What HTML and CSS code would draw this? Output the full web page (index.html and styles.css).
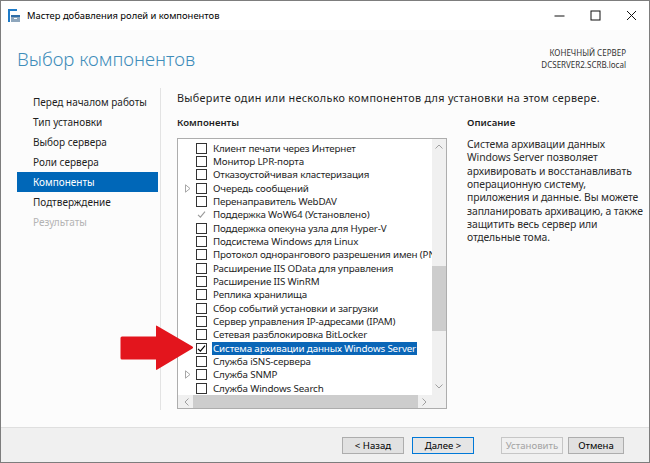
FILE: index.html
```html
<!DOCTYPE html>
<html lang="ru">
  <head>
    <meta charset="UTF-8" />
    <title>Мастер добавления ролей и компонентов</title>
    <link rel="stylesheet" href="styles.css">
  </head>
  <body>
    <div class="window">
      <div class="titlebar">
        <svg class="app-icon" width="14" height="14" viewBox="0 0 14 14">
          <rect x="1" y="0" width="2" height="13" fill="#1f7bc8" />
          <rect x="1" y="0" width="9" height="2" fill="#1f7bc8" />
          <rect x="4" y="6" width="9" height="7" fill="#8fa7bd" />
          <rect x="4" y="6" width="9" height="2" fill="#2f6ea8" />
          <rect x="7" y="9" width="3" height="1" fill="#fff" />
        </svg>
        <span class="caption">Мастер добавления ролей и компонентов</span>
        <div class="controls">
          <span class="ctl">
            <svg width="11" height="11" viewBox="0 0 11 11"><path d="M0.5 6h10" stroke="#111" stroke-width="1" /></svg>
          </span>
          <span class="ctl">
            <svg width="11" height="11" viewBox="0 0 11 11"><rect x="1" y="1" width="9" height="9" fill="none" stroke="#111" stroke-width="1" /></svg>
          </span>
          <span class="ctl">
            <svg width="11" height="11" viewBox="0 0 11 11"><path d="M1 1l9 9M10 1l-9 9" stroke="#111" stroke-width="1" /></svg>
          </span>
        </div>
      </div>

      <div class="header">
        <h1 class="page-title">Выбор компонентов</h1>
        <div class="target">КОНЕЧНЫЙ СЕРВЕР<br />DCSERVER2.SCRB.local</div>
      </div>

      <div class="main">
        <ul class="steps">
          <li>Перед началом работы</li>
          <li>Тип установки</li>
          <li>Выбор сервера</li>
          <li>Роли сервера</li>
          <li class="active">Компоненты</li>
          <li>Подтверждение</li>
          <li class="disabled">Результаты</li>
        </ul>

        <div class="page">
          <p class="intro">Выберите один или несколько компонентов для установки на этом сервере.</p>
          <div class="columns">
            <div class="col-list">
              <h2>Компоненты</h2>
              <div class="listbox">
                <div class="list-body">
                  <ul class="features">
                    <li><span class="exp"></span><span class="box"></span><span class="name">Клиент печати через Интернет</span></li>
                    <li><span class="exp"></span><span class="box"></span><span class="name">Монитор LPR-порта</span></li>
                    <li><span class="exp"></span><span class="box"></span><span class="name">Отказоустойчивая кластеризация</span></li>
                    <li><span class="exp"><svg width="6" height="9" viewBox="0 0 6 9"><path d="M0.5 0.8L5 4.5L0.5 8.2Z" fill="none" stroke="#a6a6a6" /></svg></span><span class="box"></span><span class="name">Очередь сообщений</span></li>
                    <li><span class="exp"></span><span class="box"></span><span class="name">Перенаправитель WebDAV</span></li>
                    <li><span class="exp"></span><span class="box locked"><svg width="9" height="9" viewBox="0 0 9 9"><path d="M1 4.8L3.4 7.2L8 1.6" fill="none" stroke="#9a9a9a" stroke-width="1.1" /></svg></span><span class="name">Поддержка WoW64 (Установлено)</span></li>
                    <li><span class="exp"></span><span class="box"></span><span class="name">Поддержка опекуна узла для Hyper-V</span></li>
                    <li><span class="exp"></span><span class="box"></span><span class="name">Подсистема Windows для Linux</span></li>
                    <li><span class="exp"></span><span class="box"></span><span class="name">Протокол однорангового разрешения имен (PNRP)</span></li>
                    <li><span class="exp"></span><span class="box"></span><span class="name">Расширение IIS OData для управления</span></li>
                    <li><span class="exp"></span><span class="box"></span><span class="name">Расширение IIS WinRM</span></li>
                    <li><span class="exp"></span><span class="box"></span><span class="name">Реплика хранилища</span></li>
                    <li><span class="exp"></span><span class="box"></span><span class="name">Сбор событий установки и загрузки</span></li>
                    <li><span class="exp"></span><span class="box"></span><span class="name">Сервер управления IP-адресами (IPAM)</span></li>
                    <li><span class="exp"></span><span class="box"></span><span class="name">Сетевая разблокировка BitLocker</span></li>
                    <li class="selected"><span class="exp"></span><span class="box"><svg width="9" height="9" viewBox="0 0 9 9"><path d="M1 4.8L3.4 7.2L8 1.6" fill="none" stroke="#000" stroke-width="1.2" /></svg></span><span class="name">Система архивации данных Windows Server</span></li>
                    <li><span class="exp"></span><span class="box"></span><span class="name">Служба iSNS-сервера</span></li>
                    <li><span class="exp"><svg width="6" height="9" viewBox="0 0 6 9"><path d="M0.5 0.8L5 4.5L0.5 8.2Z" fill="none" stroke="#a6a6a6" /></svg></span><span class="box"></span><span class="name">Служба SNMP</span></li>
                    <li><span class="exp"></span><span class="box"></span><span class="name">Служба Windows Search</span></li>
                  </ul>
                  <div class="vscroll">
                    <svg class="arrow-up" width="8" height="5" viewBox="0 0 8 5"><path d="M0.5 4.5L4 1L7.5 4.5" fill="none" stroke="#a0a0a0" /></svg>
                    <div class="vthumb"></div>
                    <svg class="arrow-down" width="8" height="5" viewBox="0 0 8 5"><path d="M0.5 0.5L4 4L7.5 0.5" fill="none" stroke="#a0a0a0" /></svg>
                  </div>
                </div>
                <div class="hscroll">
                  <svg width="5" height="8" viewBox="0 0 5 8"><path d="M4.5 0.5L1 4L4.5 7.5" fill="none" stroke="#a0a0a0" /></svg>
                  <div class="hthumb"></div>
                  <svg width="5" height="8" viewBox="0 0 5 8"><path d="M0.5 0.5L4 4L0.5 7.5" fill="none" stroke="#a0a0a0" /></svg>
                  <span class="corner"></span>
                </div>
              </div>
            </div>

            <div class="col-desc">
              <h2>Описание</h2>
              <p>Система архивации данных<br />Windows Server позволяет<br />архивировать и восстанавливать<br />операционную систему,<br />приложения и данные. Вы можете<br />запланировать архивацию, а также<br />защитить весь сервер или<br />отдельные тома.</p>
            </div>
          </div>
        </div>
      </div>

      <div class="footer">
        <button class="btn">&lt; Назад</button>
        <button class="btn default">Далее &gt;</button>
        <button class="btn install" disabled>Установить</button>
        <button class="btn cancel">Отмена</button>
      </div>

      <svg class="pointer" width="74" height="46" viewBox="0 0 74 46">
        <path d="M2 11.5H36V1.5Q36 0 37.3 0.9L72.5 21.5Q73.8 22.5 72.5 23.5L37.3 44.6Q36 45.4 36 44V34.5H2Q0.5 34.5 0.5 33V13Q0.5 11.5 2 11.5Z" fill="#e3151d" />
      </svg>
    </div>
  </body>
</html>
```

FILE: styles.css
```css
body {
  margin: 0;
  padding: 0;
  font-family: "Segoe UI", "Noto Sans", sans-serif;
  color: #1e1e1e;
  background-color: #fff;
}

.window {
  position: relative;
  width: 650px;
  height: 463px;
  box-sizing: border-box;
  border: 1px solid #7d7d7d;
  background-color: #fcfcfc;
  display: flex;
  flex-direction: column;
  overflow: hidden;
}

/* title bar */

.titlebar {
  height: 29px;
  background-color: #fff;
  display: flex;
  align-items: center;
  flex-shrink: 0;
}

.app-icon {
  margin-left: 6px;
  margin-right: 6px;
}

.caption {
  font-size: 9.4px;
  color: #000;
}

.controls {
  margin-left: auto;
  display: flex;
  height: 100%;
}

.ctl {
  width: 36px;
  display: flex;
  align-items: center;
  justify-content: center;
}

/* header */

.header {
  height: 55px;
  flex-shrink: 0;
  display: flex;
  justify-content: space-between;
  align-items: flex-start;
  padding: 0 23px 0 16px;
}

.page-title {
  margin: 16px 0 0;
  font-size: 18.6px;
  font-weight: 300;
  color: #3f8dba;
  line-height: 26px;
}

.target {
  margin-top: 17px;
  font-size: 8px;
  line-height: 12px;
  text-align: right;
  color: #333;
}

/* body */

.main {
  flex: 1;
  display: flex;
}

.steps {
  list-style: none;
  width: 159px;
  margin: 3px 0 17px;
  padding: 4px 0 0;
  border-right: 1px solid #e3e3e3;
}

.steps li {
  margin-left: 16px;
  width: 141px;
  height: 20px;
  line-height: 20px;
  padding-left: 16px;
  box-sizing: border-box;
  font-size: 10px;
  white-space: nowrap;
  color: #1e1e1e;
}

.steps li.active {
  background-color: #0067b8;
  color: #fff;
}

.steps li.disabled {
  color: #b4b4b4;
}

.page {
  flex: 1;
  padding: 6px 0 0 16px;
}

.intro {
  margin: 0;
  font-size: 10.8px;
  letter-spacing: 0.3px;
  line-height: 14px;
  white-space: nowrap;
}

.columns {
  display: flex;
  gap: 20px;
  margin-top: 11px;
}

.columns h2 {
  margin: 0 0 8px;
  font-size: 9.6px;
  line-height: 14px;
  font-weight: 600;
  color: #1e1e1e;
}

.col-list {
  width: 270px;
}

.listbox {
  height: 271px;
  box-sizing: border-box;
  border: 1px solid #adadad;
  background-color: #fff;
  display: flex;
  flex-direction: column;
}

.list-body {
  height: 256px;
  display: flex;
}

.features {
  list-style: none;
  margin: 0;
  padding: 2.5px 0 0;
  flex: 1;
  overflow: hidden;
}

.features li {
  height: 13.33px;
  display: flex;
  align-items: center;
  white-space: nowrap;
  font-size: 9.8px;
  letter-spacing: -0.15px;
  color: #1e1e1e;
}

.exp {
  width: 15px;
  margin-left: 3px;
  display: flex;
  align-items: center;
  padding-left: 4px;
  box-sizing: border-box;
  flex-shrink: 0;
}

.box {
  width: 11px;
  height: 11px;
  box-sizing: border-box;
  border: 1px solid #333;
  background-color: #fff;
  flex-shrink: 0;
  display: flex;
  align-items: center;
  justify-content: center;
}

.box.locked {
  border-color: #fff;
}

.name {
  margin-left: 5px;
  padding: 0 1px;
  line-height: 13px;
}

.features li.selected .name {
  background-color: #0a66b7;
  color: #fff;
}

.vscroll {
  width: 14px;
  background-color: #f0f0f0;
  position: relative;
  flex-shrink: 0;
}

.arrow-up {
  position: absolute;
  top: 5px;
  left: 3px;
}

.arrow-down {
  position: absolute;
  bottom: 6px;
  left: 3px;
}

.vthumb {
  position: absolute;
  top: 127px;
  left: 0;
  width: 14px;
  height: 65px;
  background-color: #cdcdcd;
}

.hscroll {
  flex: 1;
  display: flex;
  align-items: center;
  background-color: #f0f0f0;
  padding-left: 6px;
}

.hthumb {
  width: 225px;
  height: 100%;
  background-color: #cdcdcd;
  margin: 0 4px 0 4px;
}

.corner {
  width: 14px;
  height: 100%;
  margin-left: 4px;
  background-color: #f0f0f0;
}

.col-desc {
  width: 170px;
}

.col-desc p {
  margin: 0;
  font-size: 10.4px;
  letter-spacing: -0.1px;
  line-height: 13.33px;
  white-space: nowrap;
  color: #2b2b2b;
}

/* footer */

.footer {
  height: 35px;
  flex-shrink: 0;
  box-sizing: border-box;
  border-top: 1px solid #dfdfdf;
  background-color: #f0f0f0;
  display: flex;
  justify-content: flex-end;
  align-items: flex-start;
  padding: 9px 25px 0 0;
}

.btn {
  width: 62px;
  height: 17px;
  padding: 0;
  font-family: inherit;
  font-size: 9.6px;
  color: #000;
  background-color: #e1e1e1;
  border: 1px solid #adadad;
  margin-left: 8px;
}

.btn.default {
  border-color: #0078d7;
  background-color: #e5e5e5;
}

.btn.install {
  margin-left: 27px;
  background-color: #f0f0f0;
  border-color: #c6c6c6;
  color: #a3a3a3;
}

.btn.cancel {
  width: 56px;
  margin-left: 5px;
}

/* red pointer lies over the steps panel */

.pointer {
  position: absolute;
  left: 119px;
  top: 324px;
}
```
